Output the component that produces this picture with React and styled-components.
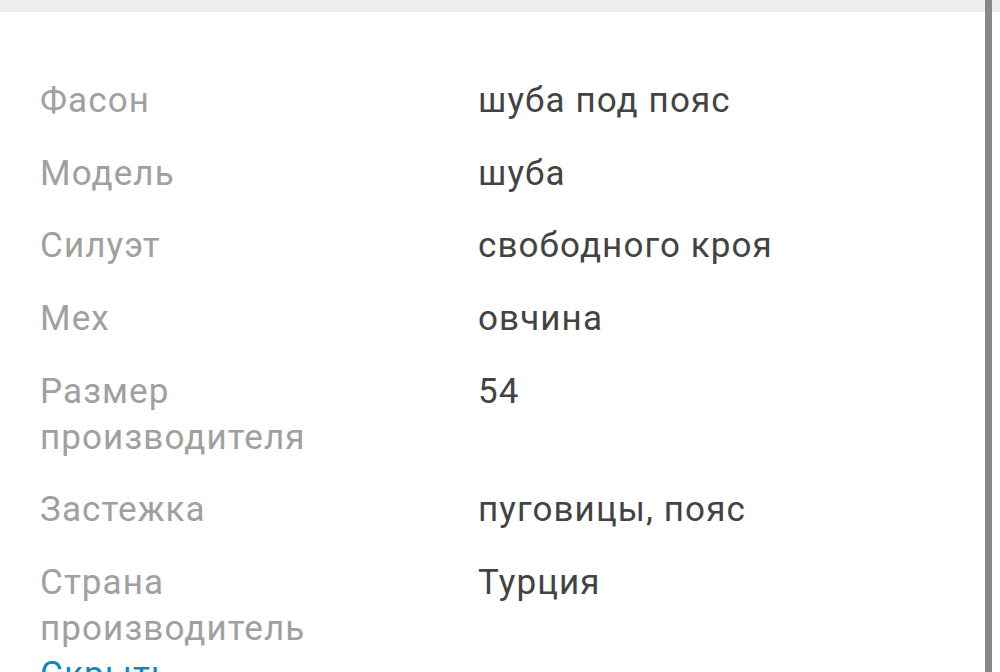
import React from "react";
import styled, { createGlobalStyle } from "styled-components";

const specs = [
  { label: "Фасон", value: "шуба под пояс" },
  { label: "Модель", value: "шуба" },
  { label: "Силуэт", value: "свободного кроя" },
  { label: "Мех", value: "овчина" },
  { label: "Размер производителя", value: "54" },
  { label: "Застежка", value: "пуговицы, пояс" },
  { label: "Страна производитель", value: "Турция" },
];

const App = () => {
  return (
    <Page>
      <GlobalStyle />
      <TopStrip />
      <Card>
        <SpecList>
          {specs.map((row) => (
            <Row key={row.label}>
              <Label>{row.label}</Label>
              <Value>{row.value}</Value>
            </Row>
          ))}
        </SpecList>
        <Toggle>Скрыть</Toggle>
      </Card>
      <ScrollBar />
    </Page>
  );
};

export default App;

const GlobalStyle = createGlobalStyle`
  html, body {
    margin: 0;
    padding: 0;
    background: #ffffff;
    overflow: hidden;
  }
  body {
    font-family: Roboto, "Noto Sans", sans-serif;
  }
`;

const Page = styled.div`
  position: relative;
  width: 1000px;
  height: 672px;
  overflow: hidden;
  background: #ffffff;
`;

const TopStrip = styled.div`
  height: 12px;
  background: #efefef;
`;

const Card = styled.div`
  padding: 66px 0 0 40px;
  width: 945px;
`;

const SpecList = styled.div`
  display: flex;
  flex-direction: column;
  gap: 26.7px;
`;

const Row = styled.div`
  display: grid;
  grid-template-columns: 438px 1fr;
  font-size: 35px;
  line-height: 46px;
  letter-spacing: 1.1px;
`;

const Label = styled.div`
  color: #a0a0a0;
  width: 300px;
`;

const Value = styled.div`
  color: #434343;
`;

const Toggle = styled.div`
  font-size: 35px;
  line-height: 46px;
  letter-spacing: 1.1px;
  color: #0b86c8;
`;

/* scrollbar thumb sits over the page edge */
const ScrollBar = styled.div`
  position: absolute;
  top: 0;
  right: 8px;
  width: 7px;
  height: 100%;
  background: #888888;
`;
